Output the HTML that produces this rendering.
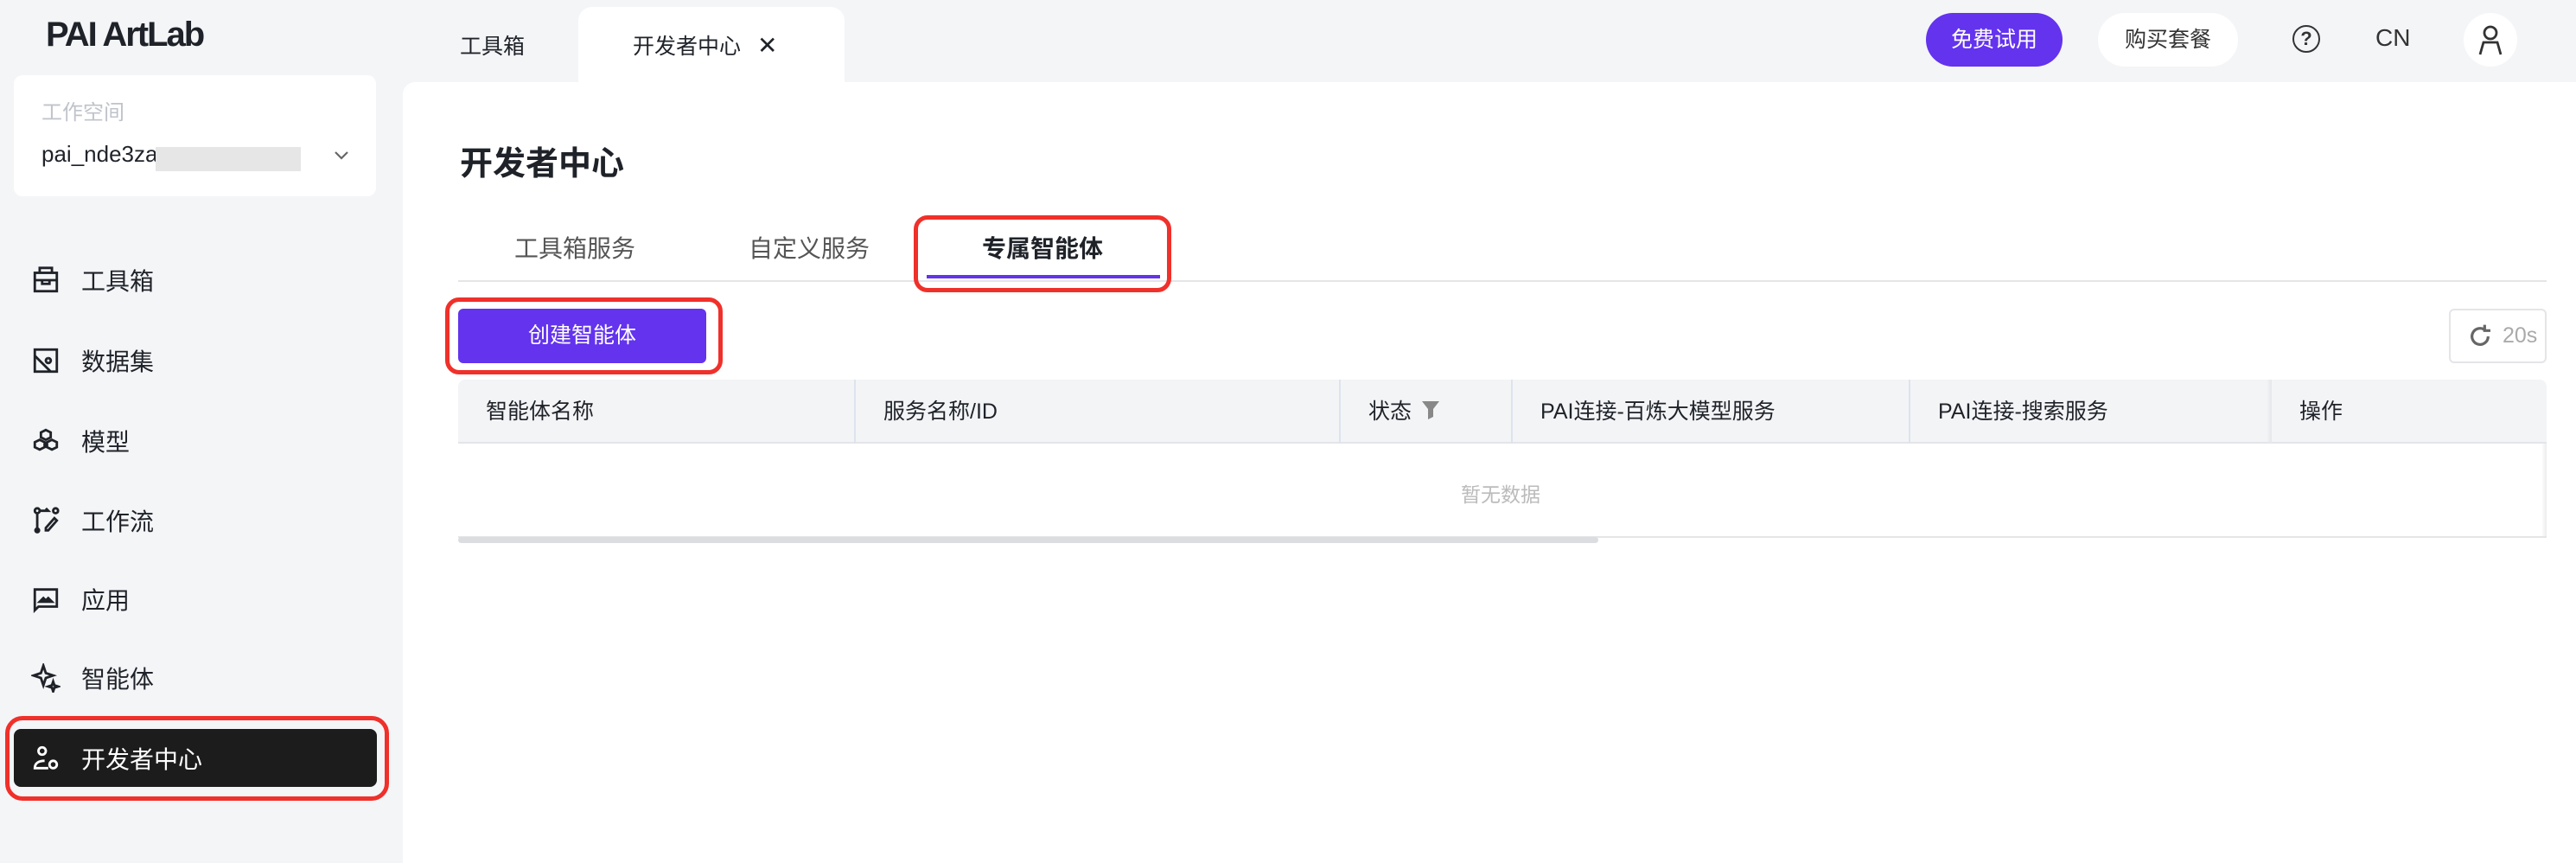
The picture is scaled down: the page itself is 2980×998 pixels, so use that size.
<!DOCTYPE html>
<html><head><meta charset="utf-8"><style>
*{box-sizing:border-box;margin:0;padding:0}
body{width:2980px;height:998px;background:#f4f5f7;font-family:"Liberation Sans","Noto Sans CJK SC",sans-serif;color:#1f2329;position:relative;overflow:hidden}
.a{position:absolute}
.nav{position:absolute;left:36px;font-size:28px;color:#1f2329;display:flex;align-items:center}
.nav svg{width:34px;height:34px;margin-right:24px;fill:none;stroke:#1f2329;stroke-width:2}
.th{position:absolute;top:439px;height:74px;line-height:74px;font-size:25px;color:#1f2329;padding-left:32px}
.sep{position:absolute;top:439px;width:2px;height:74px;background:#dde3ee}
</style></head><body>
<div class="a" style="left:53px;top:18px;font-size:40px;font-weight:bold;letter-spacing:-2px">PAI ArtLab</div>
<div class="a" style="left:532px;top:34px;font-size:25px">工具箱</div>
<div class="a" style="left:669px;top:8px;width:308px;height:100px;background:#fff;border-radius:16px 16px 0 0"></div>
<div class="a" style="left:732px;top:34px;font-size:25px">开发者中心</div>
<div class="a" style="left:876px;top:36px;font-size:28px">✕</div>
<div class="a" style="left:466px;top:95px;width:2514px;height:903px;background:#fff;border-radius:14px 0 0 0"></div>
<!-- workspace -->
<div class="a" style="left:16px;top:87px;width:419px;height:140px;background:#fff;border-radius:10px"></div>
<div class="a" style="left:48px;top:110px;font-size:24px;color:#bfc3ca">工作空间</div>
<div class="a" style="left:48px;top:163px;font-size:26px">pai_nde3za</div>
<div class="a" style="left:180px;top:170px;width:168px;height:28px;background:#e6e6e6"></div>
<svg class="a" style="left:386px;top:174px" width="18" height="12" viewBox="0 0 18 12" fill="none" stroke="#666" stroke-width="2.2"><path d="M2 2l7 7 7-7"/></svg>
<!-- nav -->
<div class="nav" style="top:304px"><svg viewBox="0 0 24 24"><rect x="3" y="6" width="18" height="15"/><path d="M7 6V2h10v4M3 12h18M9 12v3h6v-3"/></svg>工具箱</div>
<div class="nav" style="top:397px"><svg viewBox="0 0 24 24"><rect x="3" y="3" width="18" height="18"/><path d="M3 8l13 13M14 10a2 2 0 1 0 .1 0"/></svg>数据集</div>
<div class="nav" style="top:490px"><svg viewBox="0 0 24 24"><path d="M12 3l4 2v4l-4 2-4-2V5zM7 11l4 2v4l-4 2-4-2v-4zM17 11l4 2v4l-4 2-4-2v-4z"/></svg>模型</div>
<div class="nav" style="top:582px"><svg viewBox="0 0 24 24"><circle cx="5" cy="4" r="2"/><circle cx="5" cy="20" r="1.5" fill="#1f2329"/><circle cx="20" cy="4" r="2"/><path d="M5 6v12M7 4h7l-2-2M14 20l7-8-2-2-7 8v2z"/></svg>工作流</div>
<div class="nav" style="top:673px"><svg viewBox="0 0 24 24"><path d="M3 4h18v14H6l-3 3z"/><path d="M7 14l3-3 2 2 2-2 3 3z" fill="#1f2329"/></svg>应用</div>
<div class="nav" style="top:764px"><svg viewBox="0 0 24 24"><path d="M10 2l2 6 6 2-6 2-2 6-2-6-6-2 6-2zM18 15l1 3 3 1-3 1-1 3-1-3-3-1 3-1z"/></svg>智能体</div>
<div class="a" style="left:6px;top:828px;width:444px;height:98px;border:5px solid #f0302a;border-radius:20px"></div>
<div class="a" style="left:16px;top:843px;width:420px;height:67px;background:#1c1c1c;border-radius:8px"></div>
<div class="nav" style="top:857px;color:#fff"><svg viewBox="0 0 24 24" style="stroke:#fff"><circle cx="9" cy="6" r="3"/><path d="M14 20H3c0-4 3-6 8-6"/><circle cx="18" cy="17" r="3"/></svg>开发者中心</div>
<!-- top right -->
<div class="a" style="left:2228px;top:15px;width:158px;height:62px;background:#6333ee;border-radius:31px;color:#fff;font-size:25px;text-align:center;line-height:62px">免费试用</div>
<div class="a" style="left:2427px;top:15px;width:162px;height:62px;background:#fff;border-radius:31px;font-size:25px;text-align:center;line-height:62px;color:#333">购买套餐</div>
<div class="a" style="left:2652px;top:29px;width:32px;height:32px;border:2.5px solid #333;border-radius:50%;font-size:22px;text-align:center;line-height:28px;font-weight:bold;color:#333">?</div>
<div class="a" style="left:2748px;top:28px;font-size:28px;color:#333">CN</div>
<div class="a" style="left:2850px;top:15px;width:62px;height:62px;background:#fff;border-radius:50%"></div>
<svg class="a" style="left:2866px;top:27px" width="30" height="38" viewBox="0 0 30 38" fill="none" stroke="#333" stroke-width="2.8"><circle cx="15" cy="11" r="7"/><path d="M3 36l4-14h16l4 14"/></svg>
<!-- content -->
<div class="a" style="left:532px;top:158px;font-size:38px;font-weight:bold">开发者中心</div>
<div class="a" style="left:595px;top:266px;font-size:28px;color:#555">工具箱服务</div>
<div class="a" style="left:866px;top:266px;font-size:28px;color:#555">自定义服务</div>
<div class="a" style="left:1136px;top:266px;font-size:28px;font-weight:bold">专属智能体</div>
<div class="a" style="left:530px;top:324px;width:2416px;height:2px;background:#e3e5e8"></div>
<div class="a" style="left:1072px;top:318px;width:270px;height:4px;background:#6333ee"></div>
<div class="a" style="left:1057px;top:249px;width:298px;height:89px;border:5px solid #f0302a;border-radius:16px"></div>
<div class="a" style="left:515px;top:344px;width:321px;height:89px;border:5px solid #f0302a;border-radius:16px"></div>
<div class="a" style="left:530px;top:357px;width:287px;height:63px;background:#6333ee;border-radius:6px;color:#fff;font-size:25px;text-align:center;line-height:63px">创建智能体</div>
<div class="a" style="left:2833px;top:357px;width:113px;height:63px;border:2px solid #e3e5e8;border-radius:6px;color:#aaa;font-size:25px;line-height:59px;padding-left:60px">20s</div>
<svg class="a" style="left:2853px;top:373px" width="32" height="32" viewBox="0 0 24 24" fill="none" stroke="#666" stroke-width="2.4"><path d="M19 12a7 7 0 1 1-3-5.7M16 2v5h5"/></svg>
<!-- table -->
<div class="a" style="left:530px;top:439px;width:2416px;height:74px;background:#f3f4f6;border-radius:8px 8px 0 0;border-bottom:2px solid #e3e5e8"></div>
<div class="th" style="left:530px">智能体名称</div>
<div class="sep" style="left:988px"></div>
<div class="th" style="left:990px">服务名称/ID</div>
<div class="sep" style="left:1549px"></div>
<div class="th" style="left:1551px">状态</div>
<svg class="a" style="left:1644px;top:462px" width="22" height="24" viewBox="0 0 22 24"><path d="M1 2h20l-7 9v9l-6 3V11z" fill="#888"/></svg>
<div class="sep" style="left:1748px"></div>
<div class="th" style="left:1750px">PAI连接-百炼大模型服务</div>
<div class="sep" style="left:2208px"></div>
<div class="th" style="left:2210px">PAI连接-搜索服务</div>
<div class="a" style="left:2622px;top:439px;width:6px;height:74px;background:linear-gradient(90deg,transparent,#e6e7ea)"></div>
<div class="th" style="left:2628px">操作</div>
<div class="a" style="left:2940px;top:513px;width:6px;height:107px;background:linear-gradient(90deg,transparent,#ececec)"></div>
<div class="a" style="left:1690px;top:553px;font-size:23px;color:#bbb">暂无数据</div>
<div class="a" style="left:530px;top:620px;width:2416px;height:2px;background:#e3e5e8"></div>
<div class="a" style="left:530px;top:621px;width:1319px;height:7px;background:#dcdde0;border-radius:4px"></div>
</body></html>
